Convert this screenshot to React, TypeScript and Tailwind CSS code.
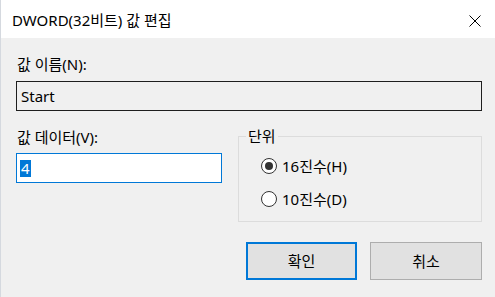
import React from "react";

const font = "font-['Noto_Sans','Noto_Sans_CJK_KR',sans-serif]";

function Radio({ checked, label }: { checked: boolean; label: string }) {
  return (
    <div className="flex items-center h-[16px]">
      <div className="w-[16px] h-[16px] rounded-full border border-[#333333] bg-white flex items-center justify-center">
        {checked && <div className="w-[8px] h-[8px] rounded-full bg-[#333333]" />}
      </div>
      <span className="ml-[5px] text-[15px] leading-[20px] text-black">{label}</span>
    </div>
  );
}

export default function App() {
  return (
    <div className={`w-[495px] h-[297px] bg-[#f0f0f0] overflow-hidden border-l border-[#d5d9df] ${font}`}>
      {/* Title bar */}
      <div className="h-[38px] pt-[2px] bg-white flex items-center justify-between pl-[11px] pr-[14px]">
        <span className="text-[15px] leading-[20px] text-black">DWORD(32비트) 값 편집</span>
        <svg width="12" height="12" viewBox="0 0 12 12" className="mt-[1px]">
          <path d="M0.5 0.5 L11.5 11.5 M11.5 0.5 L0.5 11.5" stroke="#000" strokeWidth="1" />
        </svg>
      </div>

      {/* Body */}
      <div className="pl-[15px] w-[481px] flex flex-col">
        <div className="mt-[16px] text-[15px] leading-[20px] pl-[1px]">값 이름(N):</div>
        <div className="mt-[7px] h-[30px] border border-[#1e1e1e] flex items-center pl-[4px] text-[15px]">
          Start
        </div>

        <div className="flex mt-[16px]">
          <div className="w-[206px] flex flex-col">
            <div className="text-[15px] leading-[20px] pl-[1px]">값 데이터(V):</div>
            <div className="mt-[6px] h-[30px] border border-[#0078d7] bg-white flex items-center pl-[3px]">
              <span className="bg-[#0078d7] text-white text-[15px] leading-[17px] px-[1px]">4</span>
            </div>
          </div>

          <div className="ml-[16px] mt-[9px] w-[244px] h-[86px] border border-[#dcdcdc] relative pl-[22px] pt-[21px] flex flex-col gap-[17px]">
            <span className="absolute left-[7px] top-[-11px] px-[2px] bg-[#f0f0f0] text-[15px] leading-[20px]">단위</span>
            <Radio checked label="16진수(H)" />
            <Radio checked={false} label="10진수(D)" />
          </div>
        </div>

        <div className="flex justify-end gap-[13px] mt-[20px]">
          <button className="w-[111px] h-[38px] bg-[#e1e1e1] border-2 border-[#0078d7] text-[15px]">확인</button>
          <button className="w-[112px] h-[38px] bg-[#e1e1e1] border border-[#adadad] text-[15px]">취소</button>
        </div>
      </div>
    </div>
  );
}
